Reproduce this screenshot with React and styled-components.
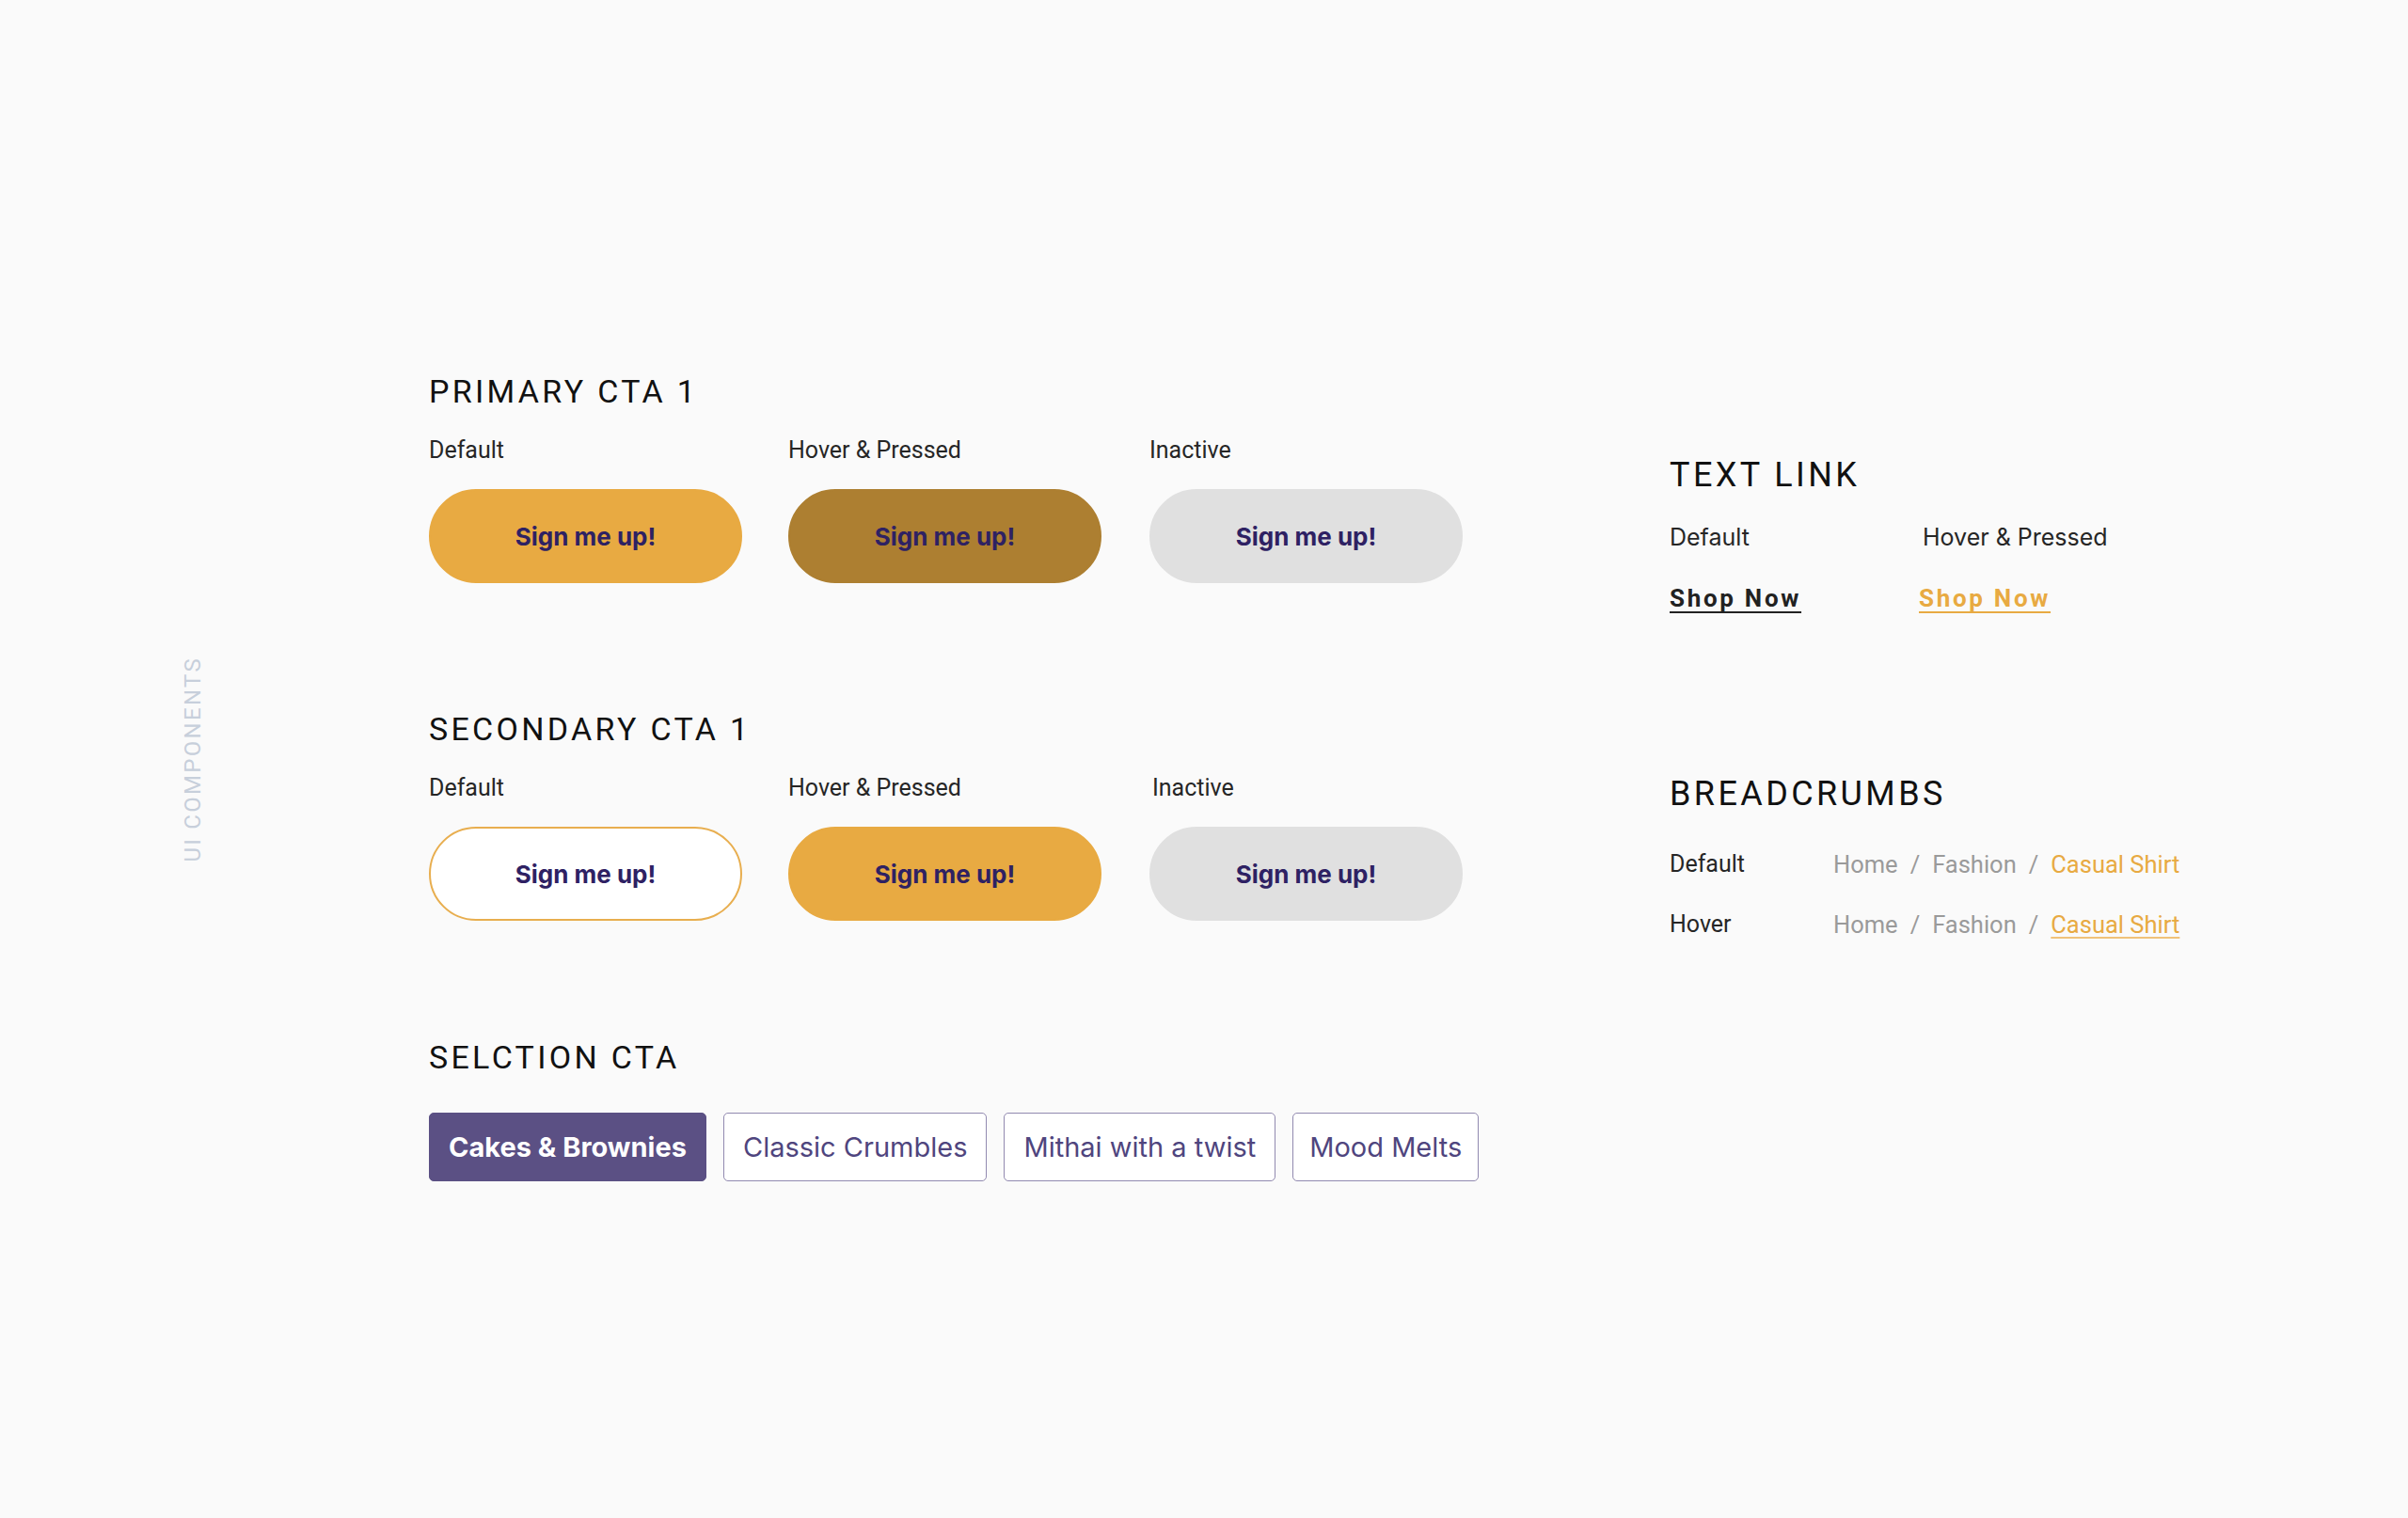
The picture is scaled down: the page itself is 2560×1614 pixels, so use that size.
import React from "react";
import styled, { createGlobalStyle } from "styled-components";

const GlobalStyle = createGlobalStyle`
  html, body {
    margin: 0;
    padding: 0;
    background: #fafafa;
  }
  * {
    box-sizing: border-box;
  }
`;

const Page = styled.div`
  display: flex;
  align-items: flex-start;
  min-height: 100vh;
  background: #fafafa;
  font-family: Roboto, "Liberation Sans", sans-serif;
  color: #1a1a1a;
`;

const Rail = styled.aside`
  width: 456px;
  height: 100vh;
  flex-shrink: 0;
  display: flex;
  align-items: center;
  padding-left: 193px;
`;

const RailText = styled.span`
  writing-mode: vertical-rl;
  transform: rotate(180deg);
  font-size: 24px;
  line-height: 24px;
  letter-spacing: 2.3px;
  color: #c7cfdb;
`;

const LeftColumn = styled.main`
  width: 1319px;
  flex-shrink: 0;
  padding-top: 399px;
`;

const RightColumn = styled.section`
  padding-top: 487px;
`;

const Section = styled.section`
  margin-bottom: ${(p) => p.$after || 0}px;
`;

const Heading = styled.h2`
  margin: 0 0 ${(p) => p.$below || 33}px;
  font-family: Roboto, "Liberation Sans", sans-serif;
  font-weight: 400;
  font-size: ${(p) => (p.$wide ? 36 : 34)}px;
  line-height: ${(p) => (p.$wide ? 36 : 34)}px;
  letter-spacing: ${(p) => (p.$wide ? 3.4 : 3.3)}px;
  color: #111;
`;

const StateGrid = styled.div`
  display: grid;
  grid-template-columns: 382px 384px 333px;
`;

const StateCell = styled.div`
  display: flex;
  flex-direction: column;
  gap: 29px;
`;

const Label = styled.div`
  font-family: ${(p) => (p.$inter ? "Inter" : "Roboto")}, "Liberation Sans", sans-serif;
  font-size: 25px;
  line-height: 25px;
  color: #262626;
  padding-left: ${(p) => p.$nudge || 0}px;
`;

const variants = {
  primary: { bg: "#e8aa42", border: "#e8aa42" },
  pressed: { bg: "#ad7f31", border: "#ad7f31" },
  inactive: { bg: "#e0e0e0", border: "#e0e0e0" },
  outline: { bg: "#ffffff", border: "#e8ae4f" },
};

const CtaButton = styled.button`
  width: 333px;
  height: 100px;
  border-radius: 50px;
  border: 2px solid ${(p) => variants[p.$variant].border};
  background: ${(p) => variants[p.$variant].bg};
  color: #2e2163;
  font-family: Inter, "Liberation Sans", sans-serif;
  font-weight: 700;
  font-size: 26px;
  cursor: pointer;
  padding: 0;
`;

const ChipRow = styled.div`
  display: flex;
  gap: 18px;
`;

const Chip = styled.button`
  height: 73px;
  padding: 0 ${(p) => p.$pad || 20}px;
  border-radius: 5px;
  border: 1.5px solid ${(p) => (p.$active ? "#5b5084" : "#928ab0")};
  background: ${(p) => (p.$active ? "#5b5084" : "#ffffff")};
  color: ${(p) => (p.$active ? "#ffffff" : "#4f457e")};
  font-family: Inter, "Liberation Sans", sans-serif;
  font-weight: ${(p) => (p.$active ? 700 : 400)};
  font-size: 29px;
  cursor: pointer;
`;

const LinkGrid = styled.div`
  display: grid;
  grid-template-columns: 265px auto;
  row-gap: 40px;
`;

const ShopLink = styled.a`
  justify-self: start;
  font-family: Roboto, "Liberation Sans", sans-serif;
  font-weight: 700;
  font-size: 26px;
  line-height: 25px;
  letter-spacing: 2.7px;
  color: ${(p) => (p.$hover ? "#e8aa42" : "#222")};
  text-decoration: underline;
  text-decoration-thickness: 2px;
  text-underline-offset: 5px;
  cursor: pointer;
`;

const CrumbTable = styled.div`
  display: grid;
  grid-template-columns: 174px auto;
  row-gap: 37px;
  align-items: center;
`;

const CrumbTrail = styled.nav`
  display: flex;
  align-items: center;
  gap: 13px;
  font-family: Roboto, "Liberation Sans", sans-serif;
  font-size: 25.5px;
  line-height: 25px;
  color: #9a9a9a;
  margin-top: 2px;
`;

const Crumb = styled.span`
  color: ${(p) => (p.$current ? "#e8aa42" : "#9a9a9a")};
  text-decoration: ${(p) => (p.$underline ? "underline" : "none")};
  text-decoration-color: #f0c27a;
  text-decoration-thickness: 2px;
  text-underline-offset: 4px;
`;

const Slash = styled.span`
  color: #9a9a9a;
`;

const Trail = ({ hover }) => (
  <CrumbTrail>
    <Crumb>Home</Crumb>
    <Slash>/</Slash>
    <Crumb>Fashion</Crumb>
    <Slash>/</Slash>
    <Crumb $current $underline={hover}>
      Casual Shirt
    </Crumb>
  </CrumbTrail>
);

const ctaSets = [
  {
    title: "PRIMARY CTA 1",
    after: 138,
    states: [
      { label: "Default", variant: "primary" },
      { label: "Hover & Pressed", variant: "pressed" },
      { label: "Inactive", variant: "inactive" },
    ],
  },
  {
    title: "SECONDARY CTA 1",
    after: 128,
    states: [
      { label: "Default", variant: "outline" },
      { label: "Hover & Pressed", variant: "primary" },
      { label: "Inactive", variant: "inactive", nudge: 3 },
    ],
  },
];

const chips = [
  { text: "Cakes & Brownies" },
  { text: "Classic Crumbles" },
  { text: "Mithai with a twist" },
  { text: "Mood Melts", pad: 17 },
];

export default function App() {
  return (
    <>
      <GlobalStyle />
      <Page>
        <Rail>
          <RailText>UI COMPONENTS</RailText>
        </Rail>

        <LeftColumn>
          {ctaSets.map((set) => (
            <Section key={set.title} $after={set.after}>
              <Heading>{set.title}</Heading>
              <StateGrid>
                {set.states.map((s) => (
                  <StateCell key={s.label}>
                    <Label $nudge={s.nudge}>{s.label}</Label>
                    <CtaButton $variant={s.variant}>Sign me up!</CtaButton>
                  </StateCell>
                ))}
              </StateGrid>
            </Section>
          ))}

          <Section>
            <Heading $below={42}>SELCTION CTA</Heading>
            <ChipRow>
              {chips.map((c, i) => (
                <Chip key={c.text} $active={i === 0} $pad={c.pad}>
                  {c.text}
                </Chip>
              ))}
            </ChipRow>
          </Section>
        </LeftColumn>

        <RightColumn>
          <Section $after={177}>
            <Heading $wide $below={36}>TEXT LINK</Heading>
            <LinkGrid>
              <Label $inter>Default</Label>
              <Label $inter $nudge={4}>Hover &amp; Pressed</Label>
              <ShopLink>Shop Now</ShopLink>
              <ShopLink $hover>Shop Now</ShopLink>
            </LinkGrid>
          </Section>

          <Section>
            <Heading $wide $below={43}>BREADCRUMBS</Heading>
            <CrumbTable>
              <Label>Default</Label>
              <Trail />
              <Label>Hover</Label>
              <Trail hover />
            </CrumbTable>
          </Section>
        </RightColumn>
      </Page>
    </>
  );
}
